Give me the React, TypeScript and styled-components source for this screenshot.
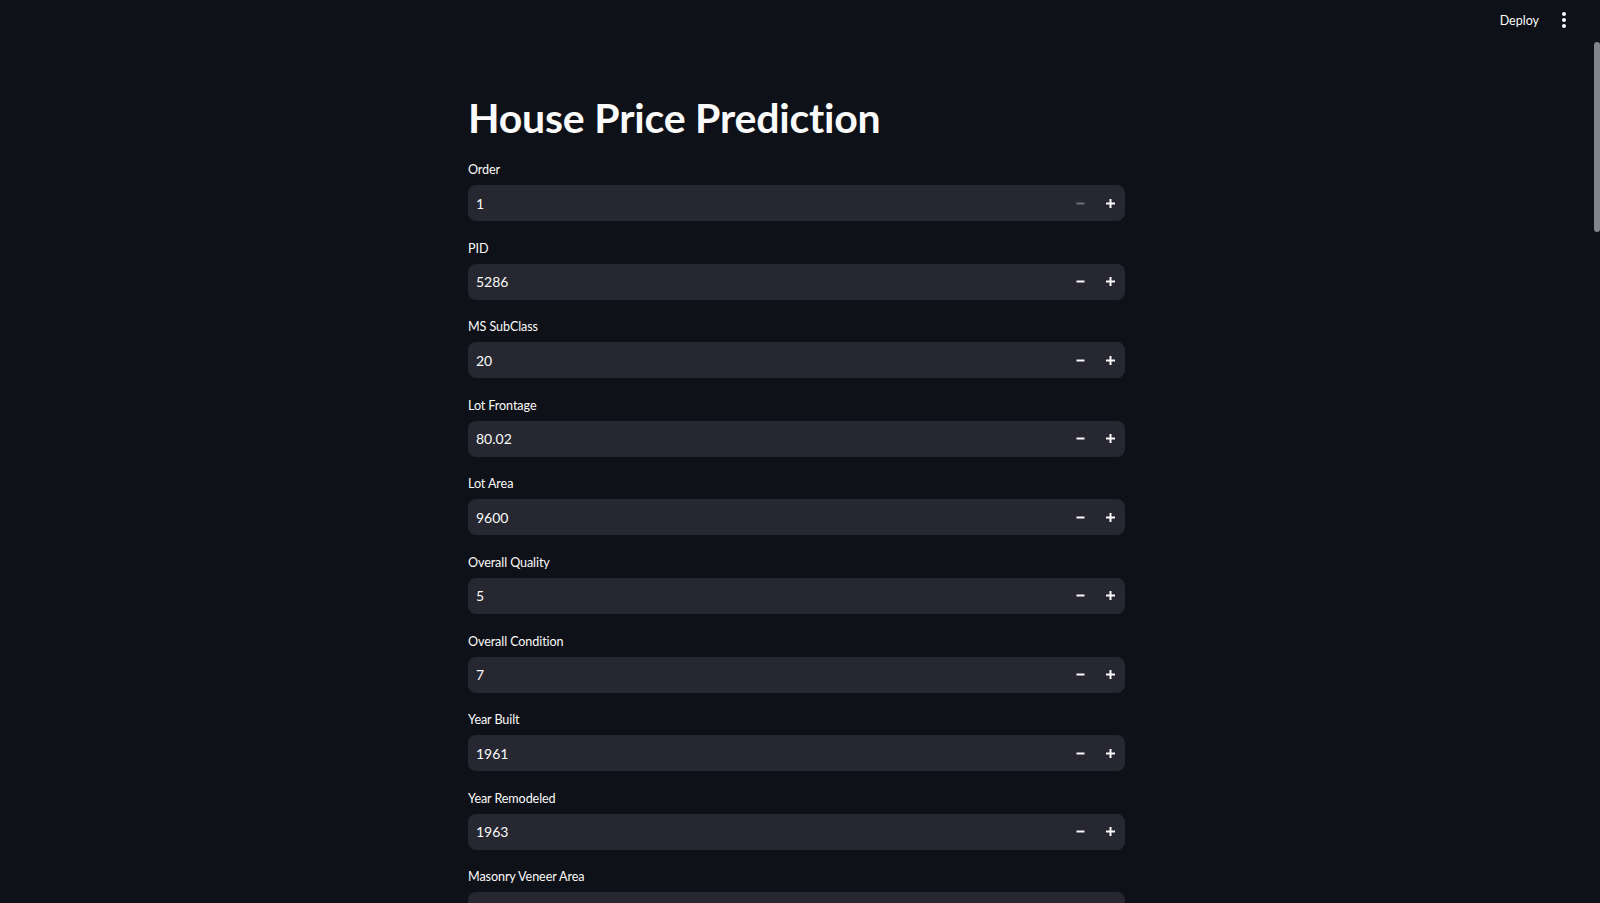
import React from "react";
import styled, { createGlobalStyle } from "styled-components";

const Global = createGlobalStyle`
  html, body { margin: 0; padding: 0; background: #0e1117; overflow: hidden; }
  body { font-family: Lato, "Noto Sans", sans-serif; color: #fafafa; }
  * { box-sizing: border-box; }
`;

const Page = styled.div`
  width: 1600px;
  height: 903px;
  background: #0e1117;
  display: flex;
  flex-direction: column;
  padding-right: 7px;
  overflow: hidden;
`;

const Header = styled.header`
  height: 40px;
  flex: none;
  display: flex;
  align-items: center;
  justify-content: flex-end;
  gap: 23px;
  padding-right: 27px;
`;

const DeployButton = styled.button`
  background: transparent;
  border: none;
  color: #fafafa;
  font-family: Lato, "Noto Sans", sans-serif;
  font-size: 12.5px;
  font-weight: 400;
  padding: 0;
  cursor: pointer;
`;

const Kebab = styled.div`
  display: flex;
  flex-direction: column;
  gap: 2px;
  align-items: center;
`;

const Dot = styled.span`
  width: 4px;
  height: 4px;
  border-radius: 50%;
  background: #fafafa;
`;

const Main = styled.main`
  width: 657px;
  margin: 0 auto;
  padding-top: 52px;
  display: flex;
  flex-direction: column;
`;

const Title = styled.h1`
  margin: 0;
  font-family: Lato, "Noto Sans", sans-serif;
  font-size: 41px;
  font-weight: 700;
  line-height: 52px;
  color: #fafafa;
  letter-spacing: -0.2px;
`;

const Fields = styled.div`
  margin-top: 15px;
  display: flex;
  flex-direction: column;
  gap: 16.6px;
`;

const Field = styled.div`
  display: flex;
  flex-direction: column;
  gap: 5px;
`;

const Label = styled.label`
  font-size: 12.6px;
  line-height: 21px;
  height: 21px;
  color: #fafafa;
  letter-spacing: -0.1px;
`;

const InputBox = styled.div`
  height: 36px;
  border-radius: 8px;
  background: #262730;
  display: flex;
  align-items: center;
`;

const Value = styled.span`
  flex: 1;
  padding-left: 8px;
  font-size: 14px;
  color: #fafafa;
`;

const StepButton = styled.button<{ $disabled?: boolean }>`
  width: 29px;
  height: 36px;
  border: none;
  background: transparent;
  display: flex;
  align-items: center;
  justify-content: center;
  padding: 0;
  color: ${(p) => (p.$disabled ? "rgba(250,250,250,0.35)" : "#fafafa")};
  cursor: pointer;
`;

const Steps = styled.div`
  display: flex;
  gap: 1px;
`;

const ScrollThumb = styled.div`
  position: fixed;
  right: 0;
  top: 42px;
  width: 6px;
  height: 190px;
  border-radius: 3px;
  background: #838489;
`;

const Minus = () => (
  <svg width="9" height="9" viewBox="0 0 9 9">
    <rect x="0.5" y="3.5" width="8" height="2" fill="currentColor" />
  </svg>
);

const Plus = () => (
  <svg width="9" height="9" viewBox="0 0 9 9">
    <rect x="0" y="3.5" width="9" height="2" fill="currentColor" />
    <rect x="3.5" y="0" width="2" height="9" fill="currentColor" />
  </svg>
);

const fields = [
  { label: "Order", value: "1", minDisabled: true },
  { label: "PID", value: "5286" },
  { label: "MS SubClass", value: "20" },
  { label: "Lot Frontage", value: "80.02" },
  { label: "Lot Area", value: "9600" },
  { label: "Overall Quality", value: "5" },
  { label: "Overall Condition", value: "7" },
  { label: "Year Built", value: "1961" },
  { label: "Year Remodeled", value: "1963" },
  { label: "Masonry Veneer Area", value: "0.00" },
];

export default function App() {
  return (
    <>
      <Global />
      <Page>
        <Header>
          <DeployButton>Deploy</DeployButton>
          <Kebab>
            <Dot />
            <Dot />
            <Dot />
          </Kebab>
        </Header>
        <Main>
          <Title>House Price Prediction</Title>
          <Fields>
            {fields.map((f) => (
              <Field key={f.label}>
                <Label>{f.label}</Label>
                <InputBox>
                  <Value>{f.value}</Value>
                  <Steps>
                    <StepButton $disabled={f.minDisabled} aria-label="decrement">
                      <Minus />
                    </StepButton>
                    <StepButton aria-label="increment">
                      <Plus />
                    </StepButton>
                  </Steps>
                </InputBox>
              </Field>
            ))}
          </Fields>
        </Main>
      </Page>
      <ScrollThumb />
    </>
  );
}
